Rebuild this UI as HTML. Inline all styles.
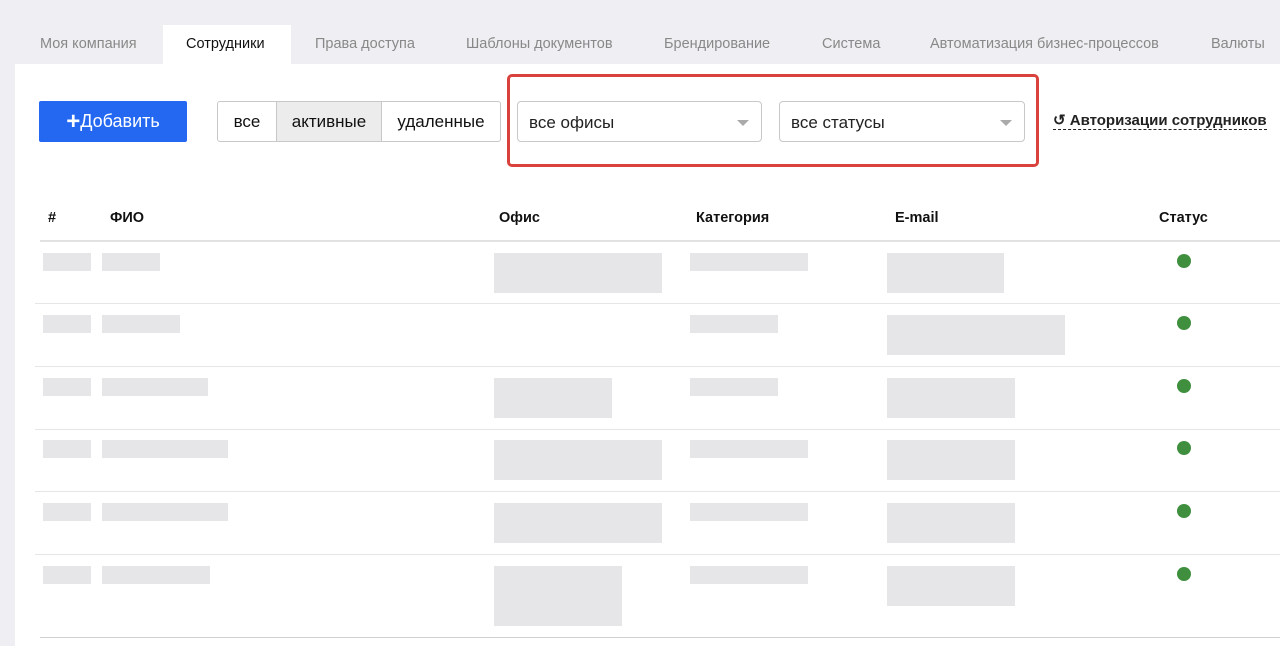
<!DOCTYPE html>
<html><head><meta charset="utf-8"><style>
*{margin:0;padding:0;box-sizing:border-box}
body{width:1280px;height:646px;overflow:hidden;background:#efeff3;font-family:"Liberation Sans",sans-serif;position:relative}
.a{position:absolute}
.tab{position:absolute;top:25px;height:39px;line-height:39px;font-size:14.5px;color:#888}
.main{position:absolute;left:15px;top:64px;width:1265px;height:582px;background:#fff}
.b{position:absolute;background:#e6e6e8}
.g{position:absolute;width:14px;height:14px;border-radius:50%;background:#3f8f3f}
.hl{position:absolute;left:35px;right:0;height:1px;background:#e6e6e6}
.h{position:absolute;top:210px;font-size:14.5px;font-weight:bold;color:#111}
</style></head><body>
<div class="a" style="left:163px;top:25px;width:128px;height:39px;background:#fff"></div>
<div class="tab" style="left:40px">Моя компания</div>
<div class="tab" style="left:186px;color:#111">Сотрудники</div>
<div class="tab" style="left:315px">Права доступа</div>
<div class="tab" style="left:466px">Шаблоны документов</div>
<div class="tab" style="left:664px">Брендирование</div>
<div class="tab" style="left:822px">Система</div>
<div class="tab" style="left:930px">Автоматизация бизнес-процессов</div>
<div class="tab" style="left:1211px">Валюты</div>
<div class="main"></div>
<div class="a" style="left:39px;top:101px;width:148px;height:41px;background:#2468f2;border-radius:2px;color:#fff;font-size:18px;line-height:40px;text-align:center"><b style="font-size:24px;vertical-align:-2px">+</b>Добавить</div>
<div class="a" style="left:217px;top:101px;width:284px;height:41px;border:1px solid #c8c8c8;border-radius:3px;font-size:17px;line-height:40px;color:#111;display:flex;overflow:hidden">
<div style="width:58px;text-align:center">все</div>
<div style="width:106px;text-align:center;background:#ececec;border-left:1px solid #c8c8c8;border-right:1px solid #c8c8c8">активные</div>
<div style="flex:1;text-align:center">удаленные</div></div>
<div class="a" style="left:507px;top:74px;width:532px;height:93px;border:3px solid #d9413c;border-radius:5px"></div>
<div class="a" style="left:517px;top:101px;width:245px;height:41px;border:1px solid #c8c8c8;border-radius:4px;font-size:17px;line-height:41px;padding-left:11px;color:#222">все офисы<span class="a" style="right:12px;top:18px;border:6px solid transparent;border-top:6px solid #aaa;border-bottom:0"></span></div>
<div class="a" style="left:779px;top:101px;width:246px;height:41px;border:1px solid #c8c8c8;border-radius:4px;font-size:17px;line-height:41px;padding-left:11px;color:#222">все статусы<span class="a" style="right:12px;top:18px;border:6px solid transparent;border-top:6px solid #aaa;border-bottom:0"></span></div>
<div class="a" style="left:1053px;top:112px;font-size:15px;font-weight:bold;color:#222;border-bottom:1px dashed #222;line-height:17px">↺ Авторизации сотрудников</div>
<div class="h" style="left:48px">#</div><div class="h" style="left:110px">ФИО</div><div class="h" style="left:499px">Офис</div><div class="h" style="left:696px">Категория</div><div class="h" style="left:895px">E-mail</div><div class="h" style="left:1159px">Статус</div>
<div class="a" style="left:40px;right:0;top:240px;height:2px;background:#e2e2e2"></div>
<div class="hl" style="top:303px"></div><div class="hl" style="top:366px"></div><div class="hl" style="top:429px"></div><div class="hl" style="top:491px"></div><div class="hl" style="top:554px"></div>
<div class="a" style="left:40px;right:0;top:637px;height:1px;background:#d0d0d0"></div>
<div class="b" style="left:43px;top:253px;width:48px;height:18px"></div><div class="b" style="left:102px;top:253px;width:58px;height:18px"></div><div class="b" style="left:494px;top:253px;width:168px;height:40px"></div><div class="b" style="left:690px;top:253px;width:118px;height:18px"></div><div class="b" style="left:887px;top:253px;width:117px;height:40px"></div><div class="g" style="left:1177px;top:254px"></div>
<div class="b" style="left:43px;top:315px;width:48px;height:18px"></div><div class="b" style="left:102px;top:315px;width:78px;height:18px"></div><div class="b" style="left:690px;top:315px;width:88px;height:18px"></div><div class="b" style="left:887px;top:315px;width:178px;height:40px"></div><div class="g" style="left:1177px;top:316px"></div>
<div class="b" style="left:43px;top:378px;width:48px;height:18px"></div><div class="b" style="left:102px;top:378px;width:106px;height:18px"></div><div class="b" style="left:494px;top:378px;width:118px;height:40px"></div><div class="b" style="left:690px;top:378px;width:88px;height:18px"></div><div class="b" style="left:887px;top:378px;width:128px;height:40px"></div><div class="g" style="left:1177px;top:379px"></div>
<div class="b" style="left:43px;top:440px;width:48px;height:18px"></div><div class="b" style="left:102px;top:440px;width:126px;height:18px"></div><div class="b" style="left:494px;top:440px;width:168px;height:40px"></div><div class="b" style="left:690px;top:440px;width:118px;height:18px"></div><div class="b" style="left:887px;top:440px;width:128px;height:40px"></div><div class="g" style="left:1177px;top:441px"></div>
<div class="b" style="left:43px;top:503px;width:48px;height:18px"></div><div class="b" style="left:102px;top:503px;width:126px;height:18px"></div><div class="b" style="left:494px;top:503px;width:168px;height:40px"></div><div class="b" style="left:690px;top:503px;width:118px;height:18px"></div><div class="b" style="left:887px;top:503px;width:128px;height:40px"></div><div class="g" style="left:1177px;top:504px"></div>
<div class="b" style="left:43px;top:566px;width:48px;height:18px"></div><div class="b" style="left:102px;top:566px;width:108px;height:18px"></div><div class="b" style="left:494px;top:566px;width:128px;height:60px"></div><div class="b" style="left:690px;top:566px;width:118px;height:18px"></div><div class="b" style="left:887px;top:566px;width:128px;height:40px"></div><div class="g" style="left:1177px;top:567px"></div>
</body></html>
